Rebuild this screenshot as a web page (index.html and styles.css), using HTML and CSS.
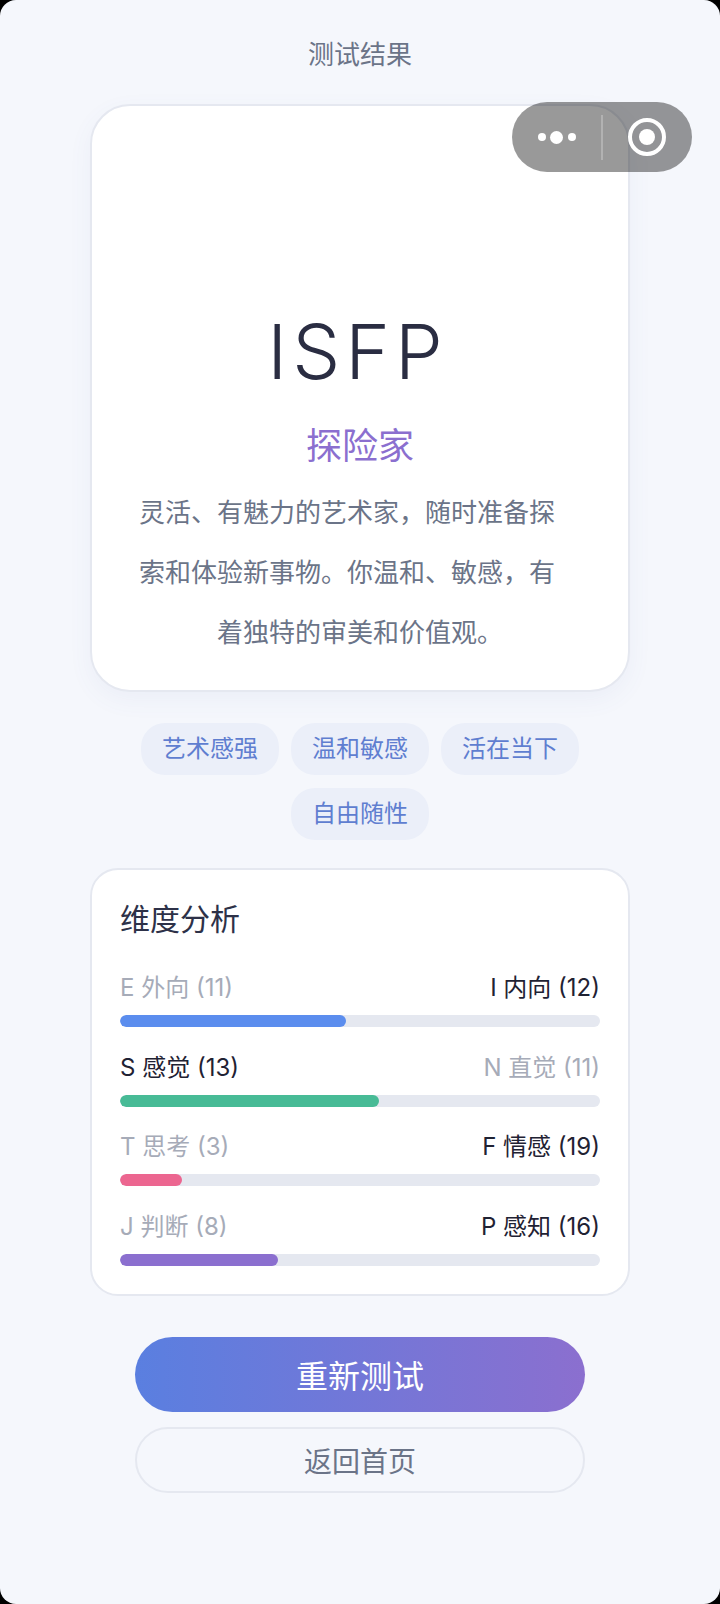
FILE: index.html
```html
<!DOCTYPE html>
<html lang="zh-CN">
  <head>
    <meta charset="UTF-8" />
    <meta name="viewport" content="width=device-width, initial-scale=1.0" />
    <title>测试结果</title>
    <link rel="stylesheet" href="styles.css">
  </head>
  <body>
    <div class="page">
      <header class="page-title">测试结果</header>

      <div class="capsule">
        <span class="capsule-dots">
          <i class="dot"></i>
          <i class="dot dot-big"></i>
          <i class="dot"></i>
        </span>
        <span class="capsule-line"></span>
        <span class="capsule-ring"><i></i></span>
      </div>

      <section class="result-card">
        <div class="type-code">ISFP</div>
        <div class="type-name">探险家</div>
        <p class="type-desc">
          <span class="desc-line full">灵活、有魅力的艺术家，随时准备探</span>
          <span class="desc-line full">索和体验新事物。你温和、敏感，有</span>
          <span class="desc-line">着独特的审美和价值观。</span>
        </p>
      </section>

      <div class="tags">
        <span class="tag">艺术感强</span>
        <span class="tag">温和敏感</span>
        <span class="tag">活在当下</span>
        <span class="tag">自由随性</span>
      </div>

      <section class="dimensions">
        <h2>维度分析</h2>

        <div class="dim-row">
          <div class="dim-labels">
            <span class="muted">E 外向 (11)</span>
            <span>I 内向 (12)</span>
          </div>
          <div class="bar"><div class="bar-fill blue" style="width: 47%"></div></div>
        </div>

        <div class="dim-row">
          <div class="dim-labels">
            <span>S 感觉 (13)</span>
            <span class="muted">N 直觉 (11)</span>
          </div>
          <div class="bar"><div class="bar-fill green" style="width: 54%"></div></div>
        </div>

        <div class="dim-row">
          <div class="dim-labels">
            <span class="muted">T 思考 (3)</span>
            <span>F 情感 (19)</span>
          </div>
          <div class="bar"><div class="bar-fill pink" style="width: 13%"></div></div>
        </div>

        <div class="dim-row">
          <div class="dim-labels">
            <span class="muted">J 判断 (8)</span>
            <span>P 感知 (16)</span>
          </div>
          <div class="bar"><div class="bar-fill purple" style="width: 33%"></div></div>
        </div>
      </section>

      <div class="actions">
        <button class="btn-primary">重新测试</button>
        <button class="btn-plain">返回首页</button>
      </div>
    </div>
  </body>
</html>
```

FILE: styles.css
```css
html {
  background-color: #000;
}

body {
  margin: 0;
  padding: 0;
  font-family: Inter, "Noto Sans CJK SC", sans-serif;
}

.page {
  position: relative;
  box-sizing: border-box;
  height: 1604px;
  overflow: hidden;
  background-color: #f5f7fc;
  border-radius: 16px;
  display: flex;
  flex-direction: column;
  align-items: center;
  padding-top: 37px;
}

.page-title {
  font-size: 26px;
  line-height: 36px;
  color: #6b7488;
}

/* Mini program capsule, sits over the card */
.capsule {
  position: absolute;
  top: 102px;
  left: 512px;
  width: 180px;
  height: 70px;
  border-radius: 35px;
  background-color: rgba(0, 0, 0, 0.4);
  display: flex;
  align-items: center;
}

.capsule-dots {
  width: 89px;
  display: flex;
  align-items: center;
  justify-content: center;
  gap: 4.5px;
}

.dot {
  width: 8px;
  height: 8px;
  border-radius: 50%;
  background-color: #fff;
}

.dot-big {
  width: 13px;
  height: 13px;
}

.capsule-line {
  width: 2px;
  height: 45px;
  background-color: rgba(255, 255, 255, 0.25);
}

.capsule-ring {
  box-sizing: border-box;
  width: 38px;
  height: 38px;
  margin-left: 25px;
  border: 4px solid #fff;
  border-radius: 50%;
  display: flex;
  align-items: center;
  justify-content: center;
}

.capsule-ring i {
  width: 16px;
  height: 16px;
  border-radius: 50%;
  background-color: #fff;
}

/* Result card */
.result-card {
  box-sizing: border-box;
  width: 540px;
  height: 588px;
  margin-top: 31px;
  background-color: #fff;
  border: 2px solid #e5e8f0;
  border-radius: 40px;
  box-shadow: 0 8px 24px rgba(90, 110, 170, 0.06);
  padding: 0 30px 27px;
  display: flex;
  flex-direction: column;
  justify-content: flex-end;
  align-items: center;
  text-align: center;
}

.type-code {
  font-size: 76px;
  line-height: 90px;
  font-weight: 300;
  letter-spacing: 5px;
  padding-right: 5px;
  color: #2a2d42;
}

.type-name {
  margin-top: 26px;
  font-size: 36px;
  line-height: 48px;
  color: #8b6fcf;
}

.type-desc {
  margin: 13px 0 0;
  font-size: 26px;
  line-height: 60px;
  color: #6b7488;
}

.desc-line {
  display: block;
  white-space: nowrap;
}

/* full lines sit a character's width left of centre */
.desc-line.full {
  padding-right: 26px;
}

/* Tags */
.tags {
  width: 460px;
  margin-top: 31px;
  display: flex;
  flex-wrap: wrap;
  justify-content: center;
  gap: 13px 12px;
}

.tag {
  padding: 0 21px;
  font-size: 24px;
  line-height: 52px;
  color: #5f7ed0;
  background-color: #ebeff9;
  border-radius: 24px;
}

/* Dimensions */
.dimensions {
  box-sizing: border-box;
  width: 540px;
  margin-top: 28px;
  padding: 28px 28px 28px;
  background-color: #fff;
  border: 2px solid #e5e8f0;
  border-radius: 28px;
}

.dimensions h2 {
  margin: 0 0 31px;
  font-size: 30px;
  line-height: 42px;
  font-weight: 400;
  color: #2d3148;
}

.dim-row {
  margin-top: 23.5px;
}

.dim-labels {
  display: flex;
  justify-content: space-between;
  font-size: 24px;
  line-height: 34px;
  color: #1f2233;
  margin-bottom: 10px;
}

.muted {
  color: #a6abb8;
}

.bar {
  height: 12px;
  border-radius: 6px;
  background-color: #e5e8f0;
  overflow: hidden;
}

.bar-fill {
  height: 100%;
  border-radius: 6px;
}

.blue { background-color: #5b8dee; }
.green { background-color: #48bb96; }
.pink { background-color: #ec6690; }
.purple { background-color: #8b6fcf; }

/* Buttons */
.actions {
  margin-top: 41px;
  display: flex;
  flex-direction: column;
  gap: 15px;
}

.actions button {
  display: block;
  box-sizing: border-box;
  width: 450px;
  padding: 0;
  font-family: inherit;
  border-radius: 40px;
}

.btn-primary {
  height: 75px;
  border: none;
  font-size: 32px;
  color: #fff;
  background: linear-gradient(90deg, #5a7fe0, #8b6fcf);
}

.btn-plain {
  height: 66px;
  border: 2px solid #e5e8f0;
  font-size: 28px;
  color: #6b7488;
  background-color: transparent;
}
```
